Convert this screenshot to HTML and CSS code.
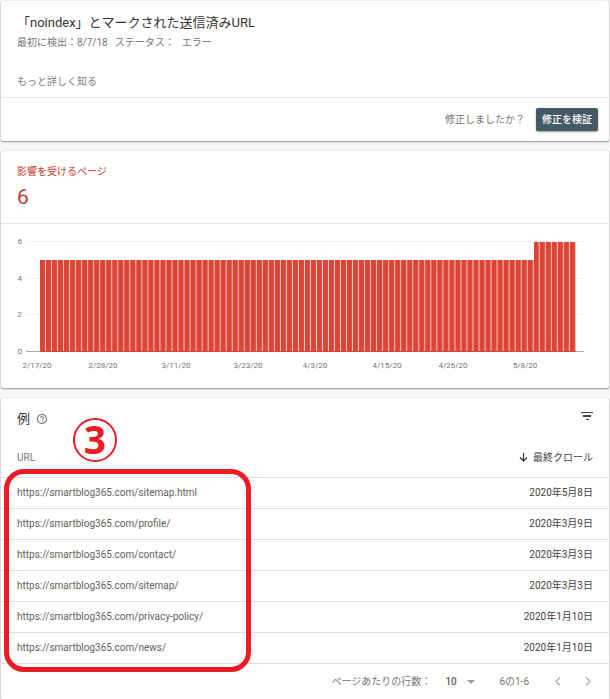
FILE: index.html
```html
<!DOCTYPE html>
<html lang="ja">
<head>
    <meta charset="utf-8">
    <title>「noindex」とマークされた送信済みURL</title>
    <link rel="stylesheet" href="styles.css">
</head>

<body>

<section class="card">
    <div class="issue">
        <h1>「noindex」とマークされた送信済みURL</h1>
        <p class="meta"><span>最初に検出：8/7/18</span><span>ステータス：</span><span>エラー</span></p>
        <a class="more" href="#">もっと詳しく知る</a>
    </div>
    <div class="validate">
        <span>修正しましたか？</span>
        <button class="primary" type="button">修正を検証</button>
    </div>
</section>

<section class="card">
    <div class="summary">
        <h2>影響を受けるページ</h2>
        <p class="count">6</p>
    </div>
    <svg class="chart" viewBox="0 0 608 164">
        <defs>
            <pattern id="days" x="39" y="0" width="6.02" height="164" patternUnits="userSpaceOnUse">
                <rect width="5.1" height="164" fill="#db4437"/>
            </pattern>
        </defs>
        <g class="grid">
            <path d="M25 17.5H583M25 54.5H583M25 90.5H583"/>
        </g>
        <path class="axis" d="M25 127.5H583"/>
        <!-- 82 days with 5 pages, then 7 days with 6 -->
        <path class="back" d="M39 36H533V18H575V128H39z"/>
        <path fill="url(#days)" d="M39 36H533V18H575V128H39z"/>
        <path class="foot" d="M39 127.5H575"/>
        <g class="ylabels">
            <text x="21" y="20">6</text>
            <text x="21" y="57">4</text>
            <text x="21" y="93">2</text>
            <text x="21" y="130">0</text>
        </g>
        <g class="xlabels">
            <text x="36" y="144">2/17/20</text>
            <text x="102" y="144">2/28/20</text>
            <text x="175" y="144">3/11/20</text>
            <text x="247" y="144">3/23/20</text>
            <text x="314" y="144">4/3/20</text>
            <text x="386" y="144">4/15/20</text>
            <text x="452" y="144">4/26/20</text>
            <text x="524" y="144">5/8/20</text>
        </g>
    </svg>
</section>

<section class="card examples">
    <div class="toolbar">
        <h2>例</h2>
        <button class="icon" type="button" aria-label="ヘルプ">
            <svg width="12" height="12" viewBox="0 0 24 24"><path fill="#757575" d="M11 18h2v-2h-2v2zm1-16C6.48 2 2 6.48 2 12s4.48 10 10 10 10-4.48 10-10S17.52 2 12 2zm0 18c-4.41 0-8-3.59-8-8s3.59-8 8-8 8 3.59 8 8-3.59 8-8 8zm0-14c-2.21 0-4 1.79-4 4h2c0-1.1.9-2 2-2s2 .9 2 2c0 2-3 1.75-3 5h2c0-2.25 3-2.5 3-5 0-2.21-1.79-4-4-4z"/></svg>
        </button>
        <button class="icon filter" type="button" aria-label="フィルタ">
            <svg width="12" height="8" viewBox="0 0 12 8"><path fill="#424242" d="M0 0h12v1H0zM2 3h8v2H2zM5 7h3v1H5z"/></svg>
        </button>
    </div>
    <table>
        <thead>
            <tr>
                <th>URL</th>
                <th class="date"><button class="sort" type="button">
                    <svg width="9" height="9" viewBox="0 0 9 9"><path fill="none" stroke="#333" stroke-width="1.2" d="M4.5 0v8M1 4.5L4.5 8 8 4.5"/></svg>
                    最終クロール
                </button></th>
            </tr>
        </thead>
        <tbody>
            <tr><td>https://smartblog365.com/sitemap.html</td><td class="date">2020年5月8日</td></tr>
            <tr><td>https://smartblog365.com/profile/</td><td class="date">2020年3月9日</td></tr>
            <tr><td>https://smartblog365.com/contact/</td><td class="date">2020年3月3日</td></tr>
            <tr><td>https://smartblog365.com/sitemap/</td><td class="date">2020年3月3日</td></tr>
            <tr><td>https://smartblog365.com/privacy-policy/</td><td class="date">2020年1月10日</td></tr>
            <tr><td>https://smartblog365.com/news/</td><td class="date">2020年1月10日</td></tr>
        </tbody>
    </table>
    <div class="pager">
        <label for="rows">ページあたりの行数：</label>
        <div class="rows">
            <select id="rows"><option>10</option></select>
            <svg width="8" height="4" viewBox="0 0 8 4"><path fill="#9e9e9e" d="M0 0h8L4 4z"/></svg>
        </div>
        <span class="range">6の1-6</span>
        <button class="icon" type="button" aria-label="前へ">
            <svg width="6" height="9" viewBox="0 0 6 9"><path fill="none" stroke="#aaa" stroke-width="1.2" d="M5 .5l-4 4 4 4"/></svg>
        </button>
        <button class="icon next" type="button" aria-label="次へ">
            <svg width="6" height="9" viewBox="0 0 6 9"><path fill="none" stroke="#aaa" stroke-width="1.2" d="M1 .5l4 4-4 4"/></svg>
        </button>
    </div>

    <!-- step marker over the URL list -->
    <div class="frame"></div>
    <div class="step">3</div>
</section>

</body>
</html>
```
FILE: styles.css
```css
* {box-sizing: border-box;}
body {margin: 0; padding: 1px 1px 0; background: #f8f8f8; color: #757575;}
body, button, select {font-family: Roboto, "Noto Sans CJK JP", sans-serif; font-size: 10px; line-height: 20px;}
body {display: flex; flex-direction: column; gap: 10px;}
h1, h2, p {margin: 0; font-weight: 400;}
h1 {font-size: 13px; line-height: 20px; color: #333;}
button {border: 0; padding: 0; background: none; color: inherit;}
svg {display: block;}

.card {background: #fff; border-radius: 2px; box-shadow: 0 1px 2px rgba(0,0,0,.4), 0 0 1px rgba(0,0,0,.3);}

.issue {padding: 12px 16px 5px; border-bottom: 1px solid #e8e8e8;}
.meta {display: flex; gap: 7px;}
.more {display: block; margin-top: 19px; color: #808080; text-decoration: none;}
.validate {display: flex; justify-content: flex-end; align-items: center; gap: 11px; padding: 10px 11px;}
.primary {height: 23px; padding: 0 6px; border-radius: 2px; background: #455a64; color: #fff; font-weight: 500; box-shadow: 0 1px 2px rgba(0,0,0,.4);}

.summary {padding: 11px 16px; border-bottom: 1px solid #e8e8e8; color: #c53929;}
.summary h2 {font-size: 10px;}
.count {font-size: 21px; line-height: 30px;}

.chart {width: 100%; height: auto;}
.chart text {font-size: 8px; fill: #757575;}
.ylabels text {text-anchor: end;}
.xlabels text {text-anchor: middle;}
.grid {stroke: #f2f2f2;}
.axis {stroke: #aaa;}
.back {fill: #f8d5d2;}
.foot {stroke: #db4437;}

.examples {position: relative;}
.toolbar {display: flex; align-items: center; gap: 6px; height: 42px; padding: 0 16px;}
.toolbar h2 {font-size: 13px; color: #333;}
.filter {margin-left: auto; padding-bottom: 6px;}

table {width: 100%; border-collapse: collapse;}
th, td {height: 31px; padding: 0 16px; border-bottom: 1px solid #e0e0e0; text-align: left; font-weight: 400;}
th {height: 37px;}
td {color: #616161;}
.date {text-align: right; color: #424242;}
.sort {display: inline-flex; align-items: center; gap: 5px;}

.pager {display: flex; justify-content: flex-end; align-items: center; height: 36px; padding: 0 18px;}
.rows {display: flex; align-items: center; margin: 0 24px 0 14px;}
.rows select {width: 22px; appearance: none; border: 0; padding: 0; background: none; color: #616161; font-weight: 500;}
.range {margin-right: 26px;}
.next {margin-left: 24px;}

.frame {position: absolute; left: 3px; top: 71px; width: 247px; height: 203px; border: 5px solid #ed1c24; border-radius: 20px;}
.step {position: absolute; left: 72px; top: 20px; width: 44px; height: 44px; border: 2px solid #ed1c24; border-radius: 50%; color: #ed1c24; font: 700 39px/38px "Open Sans", sans-serif; text-align: center;}
```
